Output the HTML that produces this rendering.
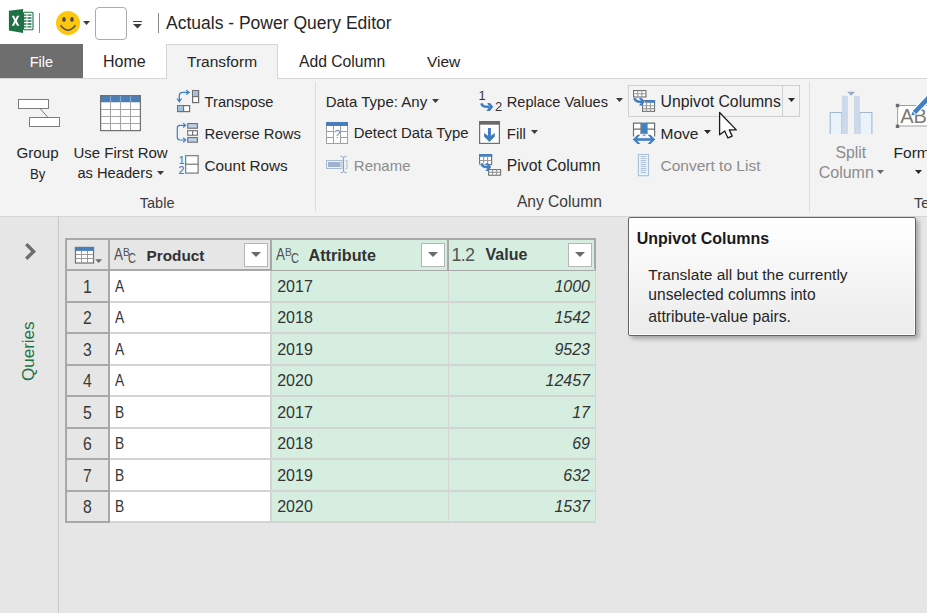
<!DOCTYPE html>
<html><head><meta charset="utf-8"><style>
html,body{margin:0;padding:0;width:927px;height:613px;overflow:hidden;background:#e6e6e6;}
body{position:relative;font-family:"Liberation Sans",sans-serif;}
.t{position:absolute;white-space:nowrap;line-height:normal;}
.r{position:absolute;display:block;}
</style></head><body>
<div class="r" style="left:0px;top:0px;width:927px;height:44px;background:#fff;"></div>
<svg class="r" style="left:8px;top:8px;" width="27" height="27" viewBox="0 0 27 27">
<rect x="15.5" y="4.3" width="9.5" height="17.5" rx="1" fill="#fff" stroke="#1e7145" stroke-width="1.1"/>
<path d="M15 7.1H18.5M19.5 7.1H23.5M15 10H18.5M19.5 10H23.5M15 13H18.5M19.5 13H23.5M15 16H18.5M19.5 16H23.5M15 18.9H18.5M19.5 18.9H23.5" stroke="#1e7145" stroke-width="1.4" fill="none"/>
<path d="M0.9 2.7L15.1 1V25L0.9 22.4Z" fill="#1e7145"/>
<path d="M3.8 7.8L6.1 7.8L7.55 10.9L9 7.8L11.3 7.8L8.8 12.8L11.3 17.8L9 17.8L7.55 14.7L6.1 17.8L3.8 17.8L6.3 12.8Z" fill="#fff"/>
</svg>
<div class="r" style="left:39px;top:13px;width:1px;height:20px;background:#8a8a8a;"></div>
<svg class="r" style="left:55px;top:10px;" width="26" height="26" viewBox="0 0 26 26">
<circle cx="13" cy="13" r="12" fill="#fdc60f"/>
<ellipse cx="9" cy="9.5" rx="1.8" ry="2.4" fill="#4d4d55"/>
<ellipse cx="17" cy="9.5" rx="1.8" ry="2.4" fill="#4d4d55"/>
<path d="M5.5 15.3Q13 25 20.5 15.3" stroke="#4d4d55" stroke-width="1.5" fill="none"/>
</svg>
<svg class="r" style="left:83px;top:21px;" width="7" height="4" viewBox="0 0 7 4"><path d="M0 0H7L3.5 4Z" fill="#3c3c3c"/></svg>
<div class="r" style="left:95px;top:7px;width:32px;height:33px;background:#fff;border:1px solid #ababab;border-radius:4px;box-sizing:border-box;"></div>
<div class="r" style="left:133px;top:21px;width:9px;height:1.3px;background:#3c3c3c;"></div>
<svg class="r" style="left:133px;top:24px;" width="9" height="4.5" viewBox="0 0 9 4.5"><path d="M0 0H9L4.5 4.5Z" fill="#3c3c3c"/></svg>
<div class="r" style="left:158px;top:13px;width:1px;height:20px;background:#8a8a8a;"></div>
<span class="t " style="top:13.16px;font-size:17.5px;color:#262626;left:166.00px;">Actuals - Power Query Editor</span>
<div class="r" style="left:0px;top:44px;width:927px;height:35px;background:#fff;"></div>
<div class="r" style="left:0px;top:78px;width:927px;height:1px;background:#d5d5d5;"></div>
<div class="r" style="left:0px;top:44px;width:83px;height:34px;background:#6e6e6e;"></div>
<span class="t " style="top:53.87px;font-size:14.5px;color:#fff;left:29.70px;">File</span>
<span class="t " style="top:52.52px;font-size:16px;color:#262626;left:103.00px;">Home</span>
<div class="r" style="left:166px;top:44px;width:112px;height:35px;background:#f3f3f3;border:1px solid #d5d5d5;border-bottom:none;box-sizing:border-box;"></div>
<span class="t " style="top:52.97px;font-size:15.5px;color:#262626;left:187.00px;">Transform</span>
<span class="t " style="top:52.79px;font-size:15.7px;color:#262626;left:299.00px;">Add Column</span>
<span class="t " style="top:52.97px;font-size:15.5px;color:#262626;left:427.00px;">View</span>
<div class="r" style="left:0px;top:79px;width:927px;height:137px;background:#f3f3f3;"></div>
<div class="r" style="left:0px;top:216px;width:927px;height:1px;background:#d5d5d5;"></div>
<div class="r" style="left:315px;top:82px;width:1px;height:130px;background:#dcdcdc;"></div>
<div class="r" style="left:809px;top:82px;width:1px;height:130px;background:#dcdcdc;"></div>
<svg class="r" style="left:17px;top:98px;" width="44" height="30" viewBox="0 0 44 30">
<rect x="1.5" y="1.5" width="30" height="9" fill="#fff" stroke="#7b7b7b"/>
<rect x="12.5" y="19.5" width="30" height="9" fill="#fff" stroke="#7b7b7b"/>
<path d="M23 10.5L31 19.5" stroke="#7b7b7b" fill="none"/>
</svg>
<span class="t " style="top:144.24px;font-size:15.2px;color:#262626;left:16.50px;">Group</span>
<span class="t " style="top:164.92px;font-size:15px;color:#262626;left:29.90px;transform:scaleX(0.88);transform-origin:0 0;">By</span>
<svg class="r" style="left:100px;top:95px;" width="42" height="37" viewBox="0 0 42 37">
<rect x="0" y="0" width="41" height="7.5" fill="#4a7ebb"/>
<rect x="1" y="7.5" width="39" height="27.5" fill="#fff"/>
<path d="M10.5 0V36M20.5 0V36M30.5 0V36" stroke="#a6a6a6" stroke-width="1.1"/>
<path d="M0 14.5H41M0 21.5H41M0 28.5H41" stroke="#a6a6a6" stroke-width="1.1"/>
<path d="M10.5 0.5V7M20.5 0.5V7M30.5 0.5V7" stroke="#8aa6c8" stroke-width="1.1"/>
<rect x="0.6" y="0.6" width="39.8" height="35" fill="none" stroke="#707070" stroke-width="1.2"/>
</svg>
<span class="t " style="top:144.42px;font-size:15px;color:#262626;left:73.50px;">Use First Row</span>
<span class="t " style="top:164.69px;font-size:14.7px;color:#262626;left:77.40px;">as Headers</span>
<svg class="r" style="left:157px;top:171px;" width="7" height="4" viewBox="0 0 7 4"><path d="M0 0H7L3.5 4Z" fill="#3c3c3c"/></svg>
<span class="t " style="top:194.57px;font-size:14.5px;color:#3c3c3c;left:139.80px;">Table</span>
<svg class="r" style="left:176px;top:89px;" width="24" height="24" viewBox="0 0 24 24">
<rect x="16.6" y="1.6" width="6" height="12" fill="#fff" stroke="#6e6e6e" stroke-width="1.2"/>
<rect x="17.2" y="2.2" width="4.8" height="5.3" fill="#9fbfdf"/>
<path d="M16.6 7.6H22.6" stroke="#6e6e6e" stroke-width="1.1"/>
<rect x="1.6" y="16.6" width="12" height="6" fill="#fff" stroke="#6e6e6e" stroke-width="1.2"/>
<rect x="2.2" y="17.2" width="5.3" height="4.8" fill="#9fbfdf"/>
<path d="M7.6 16.6V22.6" stroke="#6e6e6e" stroke-width="1.1"/>
<path d="M3.3 12.3V7Q3.3 3.4 7 3.4H12.8" stroke="#3f7fc4" stroke-width="1.3" fill="none"/>
<path d="M1.1 9.7L3.3 12.6L5.5 9.7M10.2 1.2L13.1 3.4L10.2 5.6" stroke="#3f7fc4" stroke-width="1.3" fill="none"/>
</svg>
<span class="t " style="top:93.69px;font-size:14.7px;color:#262626;left:204.60px;">Transpose</span>
<svg class="r" style="left:176px;top:122px;" width="24" height="22" viewBox="0 0 24 22">
<rect x="11.7" y="1.6" width="9.7" height="4.6" fill="#bcd2ea" stroke="#6e6e6e" stroke-width="1.1"/>
<rect x="11.7" y="8.7" width="9.7" height="4.5" fill="#fff" stroke="#6e6e6e" stroke-width="1.1"/>
<path d="M16.6 8.7V13.2" stroke="#6e6e6e" stroke-width="1.1"/>
<rect x="11.7" y="15.6" width="9.7" height="4.6" fill="#bcd2ea" stroke="#6e6e6e" stroke-width="1.1"/>
<path d="M9.3 3.3H4Q1.3 3.3 1.3 6V15.3Q1.3 18 4 18H9.3" stroke="#3f7fc4" stroke-width="1.2" fill="none"/>
<path d="M7.2 1.1L9.6 3.3L7.2 5.5M7.2 15.8L9.6 18L7.2 20.2" stroke="#3f7fc4" stroke-width="1.2" fill="none"/>
</svg>
<span class="t " style="top:125.60px;font-size:14.8px;color:#262626;left:204.60px;">Reverse Rows</span>
<svg class="r" style="left:177px;top:154px;" width="24" height="21" viewBox="0 0 24 21">
<rect x="8.7" y="1.7" width="12.4" height="17.4" fill="#fff" stroke="#6e6e6e" stroke-width="1.1"/>
<path d="M8.7 10.2H21.1" stroke="#6e6e6e" stroke-width="1.1"/>
</svg>
<span class="t " style="top:154.29px;font-size:10.5px;color:#2e6db5;left:178.80px;">1</span>
<span class="t " style="top:164.09px;font-size:10.5px;color:#2e6db5;left:178.50px;">2</span>
<span class="t " style="top:157.19px;font-size:15.25px;color:#262626;left:204.60px;">Count Rows</span>
<span class="t " style="top:93.42px;font-size:15px;color:#262626;left:325.70px;">Data Type: Any</span>
<svg class="r" style="left:432px;top:98.5px;" width="7" height="4" viewBox="0 0 7 4"><path d="M0 0H7L3.5 4Z" fill="#3c3c3c"/></svg>
<svg class="r" style="left:325px;top:121px;" width="24" height="24" viewBox="0 0 24 24">
<rect x="1.5" y="1.5" width="21" height="21" fill="#fff" stroke="#a0a0a0"/>
<rect x="1" y="1" width="22" height="4" fill="#4a7ebb"/>
<path d="M8.5 5V23M15.5 5V23M1 16.5H8.5M15.5 16.5H23M1 10.5H8.5M15.5 10.5H23" stroke="#a0a0a0"/>
</svg>
<span class="t " style="top:127.94px;font-size:11px;color:#5b87bd;left:334.30px;">?</span>
<span class="t " style="top:125.01px;font-size:14.9px;color:#262626;left:353.80px;">Detect Data Type</span>
<svg class="r" style="left:325px;top:155px;" width="24" height="19" viewBox="0 0 24 19">
<rect x="1.5" y="5.5" width="15.5" height="8" fill="#eef3fa" stroke="#a7bad4"/>
<rect x="3" y="7" width="12.5" height="5" fill="#9fb2cf"/>
<path d="M18.5 2.5V16.5" stroke="#8fa5c4" stroke-width="1.1"/>
<path d="M15.5 1.2Q18.5 1.2 18.5 3.2Q18.5 1.2 21.5 1.2M15.5 17.8Q18.5 17.8 18.5 15.8Q18.5 17.8 21.5 17.8" stroke="#8fa5c4" stroke-width="1" fill="none"/>
<path d="M20.5 5.5H22V13.5H20.5" stroke="#a7bad4" stroke-width="1" fill="none"/>
</svg>
<span class="t " style="top:157.42px;font-size:15px;color:#8c8c8c;left:353.80px;">Rename</span>
<span class="t " style="top:88.13px;font-size:13px;color:#333;left:478.60px;font-family:"Liberation Serif",serif;">1</span>
<span class="t " style="top:99.23px;font-size:13px;color:#333;left:495.00px;">2</span>
<svg class="r" style="left:479px;top:100px;" width="16" height="12" viewBox="0 0 16 12">
<path d="M2.3 3.3Q3.5 6.8 8 6.8H10" stroke="#3f7bc0" stroke-width="2.6" fill="none"/>
<path d="M8.2 3.1H11L14.2 6.8L11 10.9H7.3L10.6 6.8Z" fill="#3f7bc0"/>
</svg>
<span class="t " style="top:93.78px;font-size:14.6px;color:#262626;left:506.80px;">Replace Values</span>
<svg class="r" style="left:616px;top:98.3px;" width="7" height="4" viewBox="0 0 7 4"><path d="M0 0H7L3.5 4Z" fill="#3c3c3c"/></svg>
<svg class="r" style="left:479px;top:121px;" width="22" height="23" viewBox="0 0 22 23">
<rect x="0.6" y="0.6" width="19.8" height="21.8" fill="#fff" stroke="#707070" stroke-width="1.2"/>
<rect x="0" y="0" width="21" height="3.7" fill="#6a6a6a"/>
<path d="M9 7H11.9V14.8L15.8 11.9V15.5L10.45 21L5.1 15.5V11.9L9 14.8Z" fill="#3f7bc0"/>
</svg>
<span class="t " style="top:125.42px;font-size:15px;color:#262626;left:506.80px;">Fill</span>
<svg class="r" style="left:531px;top:130.2px;" width="7" height="4" viewBox="0 0 7 4"><path d="M0 0H7L3.5 4Z" fill="#3c3c3c"/></svg>
<svg class="r" style="left:479px;top:154px;" width="23" height="23" viewBox="0 0 23 23">
<rect x="0.6" y="0.6" width="12" height="10" fill="#fff" stroke="#6e6e6e" stroke-width="1.1"/>
<rect x="0" y="0" width="13.2" height="2.8" fill="#4a7ebb"/>
<path d="M4.6 2.8V10.6M8.6 2.8V10.6M0.6 6.5H12.6" stroke="#9a9a9a" stroke-width="1.1"/>
<rect x="9.6" y="15.6" width="12" height="5.6" fill="#fff" stroke="#6e6e6e" stroke-width="1.1"/>
<path d="M13.6 15.6V21.2M17.6 15.6V21.2M9.6 18.4H21.6" stroke="#9a9a9a" stroke-width="1.1"/>
<path d="M2.3 9.3Q3.5 13 7.5 13H9.5" stroke="#f3f3f3" stroke-width="4.2" fill="none"/>
<path d="M2.3 9.3Q3.5 13 7.5 13H9.5" stroke="#3f7fc4" stroke-width="2.6" fill="none"/>
<path d="M6.4 9.3H9.2L12.2 13L9.2 16.9H6.4L9.3 13Z" fill="#3f7fc4"/>
</svg>
<span class="t " style="top:156.74px;font-size:15.75px;color:#262626;left:506.80px;">Pivot Column</span>
<div class="r" style="left:628px;top:85px;width:172px;height:32px;background:#f3f3f3;border:1px solid #cfcfcf;box-sizing:border-box;"></div>
<div class="r" style="left:782px;top:85px;width:1px;height:32px;background:#cfcfcf;"></div>
<svg class="r" style="left:632px;top:90px;" width="24" height="23" viewBox="0 0 24 23">
<rect x="1.55" y="0.55" width="12.4" height="6.4" fill="#fff" stroke="#6e6e6e" stroke-width="1.1"/>
<path d="M5.7 0.5V7M9.8 0.5V7M1.5 3.75H14" stroke="#9a9a9a" stroke-width="1.1"/>
<rect x="10.55" y="10.55" width="12" height="10.8" fill="#fff" stroke="#6e6e6e" stroke-width="1.1"/>
<rect x="13" y="10.1" width="10.1" height="2.7" fill="#4a7ebb"/>
<path d="M14.5 12.7V21.4M18.5 12.7V21.4M10.5 15.7H22.5M10.5 18.6H22.5" stroke="#9a9a9a" stroke-width="1.1"/>
<path d="M2.4 8.2Q3.4 11.7 7.8 11.7H10" stroke="#3f7fc4" stroke-width="2.6" fill="none"/>
<path d="M6.9 8H9.8L12.8 11.7L9.8 15.6H6.9L9.9 11.7Z" fill="#3f7fc4"/>
</svg>
<span class="t " style="top:93.00px;font-size:15.8px;color:#262626;left:660.50px;">Unpivot Columns</span>
<svg class="r" style="left:788px;top:98.2px;" width="7" height="4" viewBox="0 0 7 4"><path d="M0 0H7L3.5 4Z" fill="#2a2a2a"/></svg>
<svg class="r" style="left:632px;top:122px;" width="24" height="23" viewBox="0 0 24 23">
<rect x="1.5" y="1.2" width="7.5" height="14" fill="#fff"/>
<rect x="15" y="1.2" width="7.5" height="14" fill="#fff"/>
<path d="M1.5 14.5V1.2H9V12M1.5 7.2H9M22.6 14.5V1.2H15V12M15 7.2H22.6" stroke="#6e6e6e" stroke-width="1.2" fill="none"/>
<rect x="9.2" y="0.6" width="5.8" height="11.1" fill="#3f7fc4"/>
<path d="M10.2 13.6L12.1 11.9L14 13.6Z" fill="#3f7fc4"/>
<path d="M4 17.5H20" stroke="#3f7fc4" stroke-width="2.6"/>
<path d="M0.8 17.4L5.5 12.7H8.5L3.8 17.4L8.5 22H5.5Z M23.2 17.4L18.5 12.7H15.5L20.2 17.4L15.5 22H18.5Z" fill="#3f7fc4"/>
</svg>
<span class="t " style="top:124.97px;font-size:15.5px;color:#262626;left:660.50px;">Move</span>
<svg class="r" style="left:704px;top:130px;" width="7" height="4" viewBox="0 0 7 4"><path d="M0 0H7L3.5 4Z" fill="#2a2a2a"/></svg>
<svg class="r" style="left:637px;top:154px;" width="13" height="23" viewBox="0 0 13 23">
<rect x="1.4" y="0.5" width="10.1" height="21.2" fill="#eef4fb" stroke="#a9bedb" stroke-width="1.1"/>
<path d="M3.6 2.6H9.3M3.6 4.6H9.3M3.6 6.6H9.3M3.6 8.6H9.3M3.6 10.6H9.3M3.6 12.6H9.3M3.6 14.6H9.3M3.6 16.6H9.3M3.6 18.6H9.3" stroke="#a3b8d6" stroke-width="0.9"/>
</svg>
<span class="t " style="top:156.97px;font-size:15.5px;color:#8c8c8c;left:660.50px;">Convert to List</span>
<span class="t " style="top:193.38px;font-size:15.6px;color:#3c3c3c;left:516.90px;">Any Column</span>
<svg class="r" style="left:829px;top:91px;" width="44" height="44" viewBox="0 0 44 44">
<path d="M1.2 43V21.5H12.9V43M30.8 43V21.5H42.9V43" fill="#eaf2fc" stroke="#a3b6d3" stroke-width="1.1"/>
<rect x="12.9" y="4.8" width="6" height="38.2" fill="#cbd9ea"/>
<rect x="25" y="4.8" width="5.8" height="38.2" fill="#cbd9ea"/>
<path d="M18.1 0.8H26.2L22.15 4.8Z" fill="#97aacb"/>
</svg>
<span class="t " style="top:143.70px;font-size:15.8px;color:#8c8c8c;left:835.40px;">Split</span>
<span class="t " style="top:163.52px;font-size:16px;color:#8c8c8c;left:818.70px;">Column</span>
<svg class="r" style="left:877px;top:170.2px;" width="7" height="4" viewBox="0 0 7 4"><path d="M0 0H7L3.5 4Z" fill="#6a6a6a"/></svg>
<svg class="r" style="left:895px;top:90px;" width="32" height="40" viewBox="0 0 32 40">
<rect x="2.6" y="15.5" width="40" height="20.5" fill="#fff" stroke="#a0a0a0"/>
<rect x="0.8" y="13.8" width="3.4" height="3.4" fill="#6d6d6d"/>
<rect x="0.8" y="34.6" width="3.4" height="3.4" fill="#6d6d6d"/>
<text x="5.2" y="32.9" font-family="Liberation Sans" font-size="20" fill="#7a7a7a">ABC</text>
<path d="M19.5 22.5L37 4" stroke="#fff" stroke-width="7"/>
<path d="M19.5 22.5L37 4" stroke="#3f7fc4" stroke-width="4.6"/>
<path d="M15.8 26.2L17.3 21L20.9 24.6Z" fill="#3f7fc4" stroke="#fff" stroke-width="0.8"/>
</svg>
<span class="t " style="top:143.97px;font-size:15.5px;color:#262626;left:893.60px;">Form</span>
<svg class="r" style="left:915px;top:170.2px;" width="7" height="4" viewBox="0 0 7 4"><path d="M0 0H7L3.5 4Z" fill="#2a2a2a"/></svg>
<span class="t " style="top:194.57px;font-size:14.5px;color:#3c3c3c;left:914.00px;">Te</span>
<div class="r" style="left:0px;top:217px;width:927px;height:396px;background:#e6e6e6;"></div>
<div class="r" style="left:58px;top:217px;width:1px;height:396px;background:#c8c8c8;"></div>
<svg class="r" style="left:24px;top:242px;" width="14" height="20" viewBox="0 0 14 20"><path d="M1 3.3L3.5 0.9L12 9.4L3.5 18L1 15.5L7.2 9.4Z" fill="#6d6d6d"/></svg>
<span class="t" style="left:19px;top:381px;font-size:17px;color:#217346;transform:rotate(-90deg);transform-origin:0 0;">Queries</span>
<div class="r" style="left:65px;top:238px;width:531px;height:33px;background:#a8a8a8;"></div>
<div class="r" style="left:65px;top:238px;width:45px;height:285px;background:#a8a8a8;"></div>
<div class="r" style="left:67px;top:240px;width:41px;height:29px;background:#e6e6e6;"></div>
<div class="r" style="left:110px;top:240px;width:160px;height:29px;background:#e6e6e6;"></div>
<div class="r" style="left:272px;top:240px;width:175px;height:29px;background:#d5eee0;"></div>
<div class="r" style="left:449px;top:240px;width:145px;height:29px;background:#d5eee0;"></div>
<div class="r" style="left:272px;top:269px;width:323px;height:1px;background:#d5eee0;"></div>
<div class="r" style="left:272px;top:271px;width:323px;height:1px;background:#d5eee0;"></div>
<div class="r" style="left:110px;top:271px;width:160px;height:252px;background:#fff;"></div>
<div class="r" style="left:272px;top:271px;width:323px;height:252px;background:#d5eee0;"></div>
<div class="r" style="left:67px;top:271px;width:41px;height:30px;background:#e6e6e6;"></div>
<div class="r" style="left:67px;top:303px;width:41px;height:29px;background:#e6e6e6;"></div>
<div class="r" style="left:67px;top:334px;width:41px;height:30px;background:#e6e6e6;"></div>
<div class="r" style="left:67px;top:366px;width:41px;height:29px;background:#e6e6e6;"></div>
<div class="r" style="left:67px;top:397px;width:41px;height:30px;background:#e6e6e6;"></div>
<div class="r" style="left:67px;top:429px;width:41px;height:29px;background:#e6e6e6;"></div>
<div class="r" style="left:67px;top:460px;width:41px;height:30px;background:#e6e6e6;"></div>
<div class="r" style="left:67px;top:492px;width:41px;height:29px;background:#e6e6e6;"></div>
<div class="r" style="left:270px;top:271px;width:2px;height:252px;background:#d4d4d4;"></div>
<div class="r" style="left:448px;top:271px;width:1px;height:252px;background:#d4d4d4;"></div>
<div class="r" style="left:595px;top:271px;width:1px;height:252px;background:#d4d4d4;"></div>
<div class="r" style="left:110px;top:301px;width:486px;height:2px;background:#d4d4d4;"></div>
<div class="r" style="left:110px;top:332px;width:486px;height:2px;background:#d4d4d4;"></div>
<div class="r" style="left:110px;top:364px;width:486px;height:2px;background:#d4d4d4;"></div>
<div class="r" style="left:110px;top:395px;width:486px;height:2px;background:#d4d4d4;"></div>
<div class="r" style="left:110px;top:427px;width:486px;height:2px;background:#d4d4d4;"></div>
<div class="r" style="left:110px;top:458px;width:486px;height:2px;background:#d4d4d4;"></div>
<div class="r" style="left:110px;top:490px;width:486px;height:2px;background:#d4d4d4;"></div>
<div class="r" style="left:110px;top:521px;width:486px;height:2px;background:#d4d4d4;"></div>
<div class="r" style="left:270px;top:240px;width:2px;height:31px;background:#a8a8a8;"></div>
<div class="r" style="left:447px;top:240px;width:2px;height:31px;background:#a8a8a8;"></div>
<svg class="r" style="left:74px;top:246px;" width="30" height="18" viewBox="0 0 30 18">
<rect x="1.5" y="1.5" width="18" height="15.5" fill="#fff" stroke="#6e6e6e" stroke-width="1.2"/>
<rect x="0.9" y="0.9" width="19.2" height="4" fill="#4a7ebb"/>
<path d="M7.5 4.9V16.5M13.5 4.9V16.5M1.5 8.5H19.5M1.5 12.5H19.5" stroke="#9a9a9a" stroke-width="1"/>
<path d="M21.2 13.2H28.1L24.65 17.1Z" fill="#6a6a6a"/>
</svg>
<span class="t " style="top:245.59px;font-size:15.7px;color:#505050;left:113.70px;transform:scaleX(0.86);transform-origin:0 0;">A</span>
<span class="t " style="top:245.77px;font-size:11.3px;color:#505050;left:123.00px;transform:scaleX(0.9);transform-origin:0 0;">B</span>
<span class="t " style="top:249.70px;font-size:14.8px;color:#505050;left:128.40px;transform:scaleX(0.75);transform-origin:0 0;">C</span>
<span class="t " style="top:246.95px;font-size:15.3px;color:#333;left:146.60px;font-weight:700;">Product</span>
<span class="t " style="top:245.59px;font-size:15.7px;color:#505050;left:276.00px;transform:scaleX(0.86);transform-origin:0 0;">A</span>
<span class="t " style="top:245.77px;font-size:11.3px;color:#505050;left:285.30px;transform:scaleX(0.9);transform-origin:0 0;">B</span>
<span class="t " style="top:249.70px;font-size:14.8px;color:#505050;left:290.70px;transform:scaleX(0.75);transform-origin:0 0;">C</span>
<span class="t " style="top:246.13px;font-size:16.2px;color:#333;left:308.50px;font-weight:700;">Attribute</span>
<span class="t " style="top:245.30px;font-size:18px;color:#555;left:451.50px;letter-spacing:-0.8px;">1.2</span>
<span class="t " style="top:246.32px;font-size:16px;color:#333;left:485.50px;font-weight:700;">Value</span>
<div class="r" style="left:244px;top:243px;width:24px;height:24px;background:#fff;border:1px solid #b5b5b5;box-sizing:border-box;"></div>
<svg class="r" style="left:251px;top:252px;" width="10" height="5" viewBox="0 0 10 5"><path d="M0 0H10L5.0 5Z" fill="#6a6a6a"/></svg>
<div class="r" style="left:421px;top:243px;width:24px;height:24px;background:#fff;border:1px solid #b5b5b5;box-sizing:border-box;"></div>
<svg class="r" style="left:428px;top:252px;" width="10" height="5" viewBox="0 0 10 5"><path d="M0 0H10L5.0 5Z" fill="#6a6a6a"/></svg>
<div class="r" style="left:568px;top:243px;width:24px;height:24px;background:#fff;border:1px solid #b5b5b5;box-sizing:border-box;"></div>
<svg class="r" style="left:575px;top:252px;" width="10" height="5" viewBox="0 0 10 5"><path d="M0 0H10L5.0 5Z" fill="#6a6a6a"/></svg>
<span class="t " style="top:276.66px;font-size:17.5px;color:#3a3a3a;left:0.00px;width:41px;text-align:center;left:67px;transform:scaleX(0.9);">1</span>
<span class="t " style="top:277.52px;font-size:16px;color:#333;left:114.60px;transform:scaleX(0.86);transform-origin:0 0;">A</span>
<span class="t " style="top:277.52px;font-size:16px;color:#333;left:277.20px;">2017</span>
<span class="t " style="top:277.52px;font-size:16px;color:#333;right:337.00px;font-style:italic;">1000</span>
<span class="t " style="top:308.16px;font-size:17.5px;color:#3a3a3a;left:0.00px;width:41px;text-align:center;left:67px;transform:scaleX(0.9);">2</span>
<span class="t " style="top:309.02px;font-size:16px;color:#333;left:114.60px;transform:scaleX(0.86);transform-origin:0 0;">A</span>
<span class="t " style="top:309.02px;font-size:16px;color:#333;left:277.20px;">2018</span>
<span class="t " style="top:309.02px;font-size:16px;color:#333;right:337.00px;font-style:italic;">1542</span>
<span class="t " style="top:339.66px;font-size:17.5px;color:#3a3a3a;left:0.00px;width:41px;text-align:center;left:67px;transform:scaleX(0.9);">3</span>
<span class="t " style="top:340.52px;font-size:16px;color:#333;left:114.60px;transform:scaleX(0.86);transform-origin:0 0;">A</span>
<span class="t " style="top:340.52px;font-size:16px;color:#333;left:277.20px;">2019</span>
<span class="t " style="top:340.52px;font-size:16px;color:#333;right:337.00px;font-style:italic;">9523</span>
<span class="t " style="top:371.16px;font-size:17.5px;color:#3a3a3a;left:0.00px;width:41px;text-align:center;left:67px;transform:scaleX(0.9);">4</span>
<span class="t " style="top:372.02px;font-size:16px;color:#333;left:114.60px;transform:scaleX(0.86);transform-origin:0 0;">A</span>
<span class="t " style="top:372.02px;font-size:16px;color:#333;left:277.20px;">2020</span>
<span class="t " style="top:372.02px;font-size:16px;color:#333;right:337.00px;font-style:italic;">12457</span>
<span class="t " style="top:402.66px;font-size:17.5px;color:#3a3a3a;left:0.00px;width:41px;text-align:center;left:67px;transform:scaleX(0.9);">5</span>
<span class="t " style="top:403.52px;font-size:16px;color:#333;left:114.60px;transform:scaleX(0.86);transform-origin:0 0;">B</span>
<span class="t " style="top:403.52px;font-size:16px;color:#333;left:277.20px;">2017</span>
<span class="t " style="top:403.52px;font-size:16px;color:#333;right:337.00px;font-style:italic;">17</span>
<span class="t " style="top:434.16px;font-size:17.5px;color:#3a3a3a;left:0.00px;width:41px;text-align:center;left:67px;transform:scaleX(0.9);">6</span>
<span class="t " style="top:435.02px;font-size:16px;color:#333;left:114.60px;transform:scaleX(0.86);transform-origin:0 0;">B</span>
<span class="t " style="top:435.02px;font-size:16px;color:#333;left:277.20px;">2018</span>
<span class="t " style="top:435.02px;font-size:16px;color:#333;right:337.00px;font-style:italic;">69</span>
<span class="t " style="top:465.66px;font-size:17.5px;color:#3a3a3a;left:0.00px;width:41px;text-align:center;left:67px;transform:scaleX(0.9);">7</span>
<span class="t " style="top:466.52px;font-size:16px;color:#333;left:114.60px;transform:scaleX(0.86);transform-origin:0 0;">B</span>
<span class="t " style="top:466.52px;font-size:16px;color:#333;left:277.20px;">2019</span>
<span class="t " style="top:466.52px;font-size:16px;color:#333;right:337.00px;font-style:italic;">632</span>
<span class="t " style="top:497.16px;font-size:17.5px;color:#3a3a3a;left:0.00px;width:41px;text-align:center;left:67px;transform:scaleX(0.9);">8</span>
<span class="t " style="top:498.02px;font-size:16px;color:#333;left:114.60px;transform:scaleX(0.86);transform-origin:0 0;">B</span>
<span class="t " style="top:498.02px;font-size:16px;color:#333;left:277.20px;">2020</span>
<span class="t " style="top:498.02px;font-size:16px;color:#333;right:337.00px;font-style:italic;">1537</span>
<div class="r" style="left:628px;top:217px;width:288px;height:119px;background:#f8f8f8;border:1px solid #646464;border-radius:2px;box-sizing:border-box;box-shadow:inset 1px 1px 0 #fff,inset -1px -1px 0 #fff,3px 3px 4px rgba(0,0,0,0.28);background:linear-gradient(#ffffff,#ebebeb);"></div>
<span class="t " style="top:229.52px;font-size:16px;color:#1a1a1a;left:636.70px;font-weight:700;">Unpivot Columns</span>
<span class="t " style="top:266.07px;font-size:15.5px;color:#262626;left:648.30px;">Translate all but the currently</span>
<span class="t " style="top:286.48px;font-size:15.6px;color:#262626;left:648.30px;">unselected columns into</span>
<span class="t " style="top:307.54px;font-size:15.75px;color:#262626;left:648.30px;">attribute-value pairs.</span>
<svg class="r" style="left:718px;top:111px;" width="22" height="30" viewBox="0 0 22 30">
<path d="M1.6 1.5V23.8L6.7 20L9.9 26.9L14.2 25.1L11.3 18.9H18.3Z" fill="#fff" stroke="#1a1a1a" stroke-width="1.3" stroke-linejoin="round"/>
</svg>
</body></html>
